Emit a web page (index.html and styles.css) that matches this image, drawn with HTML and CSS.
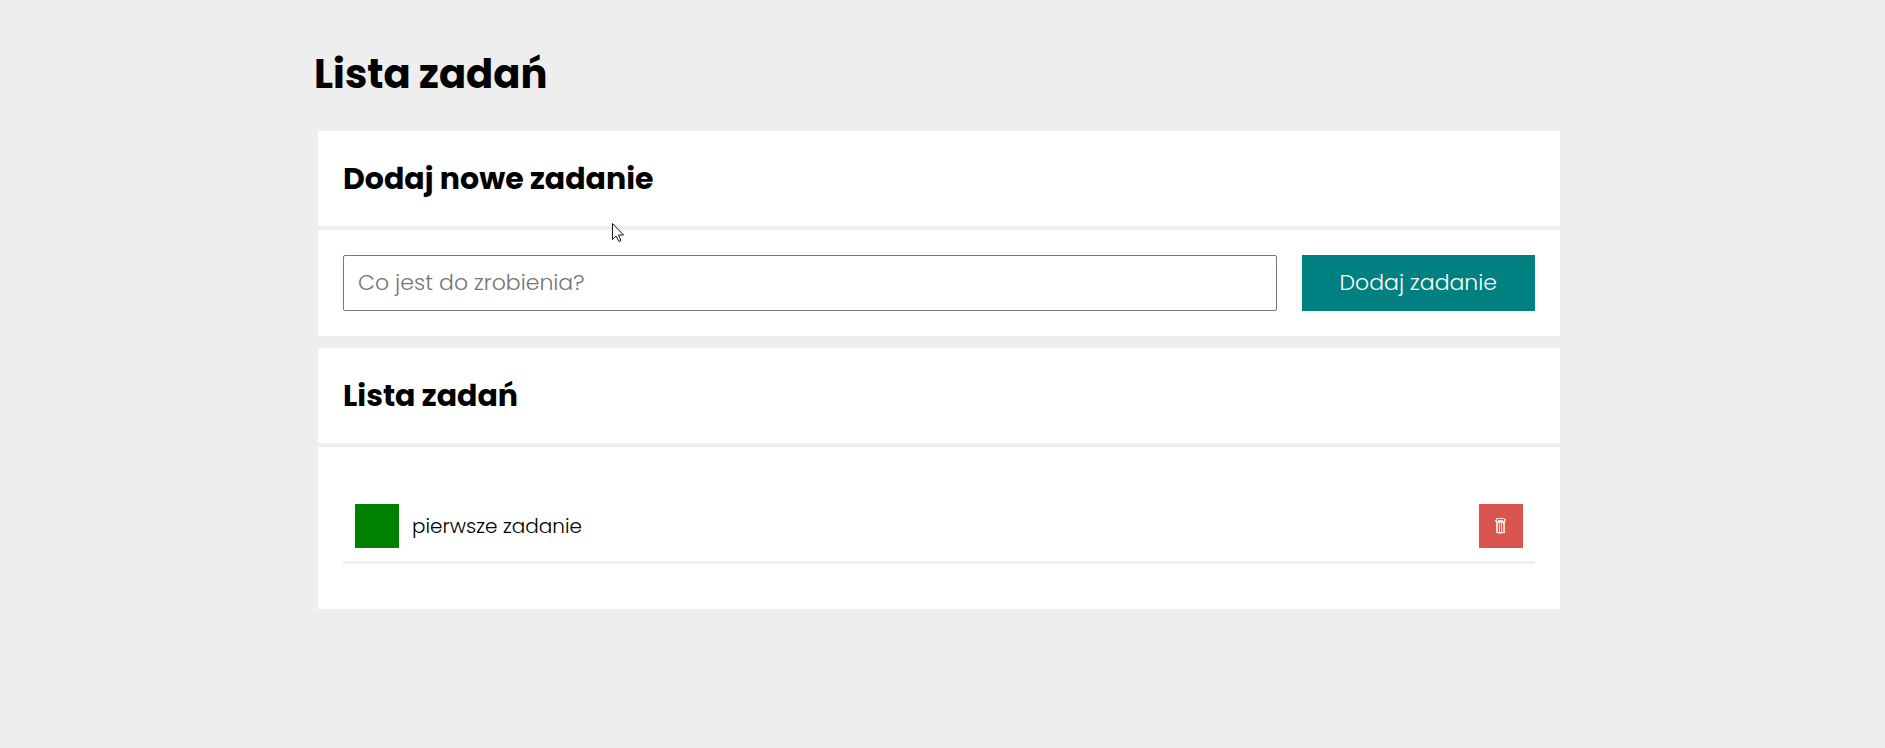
FILE: index.html
```html
<!DOCTYPE html>
<html lang="pl">
<head>
<meta charset="utf-8">
<meta name="viewport" content="width=device-width, initial-scale=1">
<title>Lista zadań</title>
<link rel="stylesheet" href="styles.css">
</head>
<body>
<main class="container">
  <h1 class="title">Lista zadań</h1>
  <section class="section">
    <h2 class="section-header">Dodaj nowe zadanie</h2>
    <form class="section-body form">
      <input class="form-input" type="text" placeholder="Co jest do zrobienia?" aria-label="Co jest do zrobienia?">
      <button class="form-button" type="button">Dodaj zadanie</button>
    </form>
  </section>
  <section class="section">
    <h2 class="section-header">Lista zadań</h2>
    <div class="section-body">
      <ul class="tasks">
        <li class="task">
          <button class="task-button task-done" type="button" aria-label="Oznacz jako zrobione"></button>
          <span class="task-text">pierwsze zadanie</span>
          <button class="task-button task-remove" type="button" aria-label="Usuń zadanie">
            <svg width="12" height="16" viewBox="0 0 12 16" fill="none" stroke="#f0dfd2" aria-hidden="true">
              <path d="M1 .5h9M1.500 1v3M0 2.500h2M0 3.500h11M3 2.500h5M9.500 1v3M1 4.500h9"/>
              <path d="M1.500 4v11M2.500 4v11M4.500 5v9M6.500 5v9M8.500 4v11M9.500 4v11M2 14.500h7"/>
              <path d="M3 15.500h5M9 .5h1M10.500 1v3" stroke="#e3b08a"/>
            </svg>
          </button>
        </li>
      </ul>
    </div>
  </section>
</main>
<svg class="cursor" width="13" height="20" viewBox="0 0 13 20" aria-hidden="true">
  <path d="M.5 .5v16l3.500-3.500 3 5.500 2-1-2.500-5.500h5z" fill="#fff" stroke="#101820"/>
</svg>
</body>
</html>
```
FILE: styles.css
```css
* {
  box-sizing: border-box;
}

body {
  margin: 0;
  padding: 0 15px 0 8px;
  background: #eee;
  color: #000;
  font-family: Poppins, Inter, "Open Sans", sans-serif;
  font-weight: 300;
}

.container {
  max-width: 1250px;
  margin: 0 auto;
  padding: 44px 4px;
}

.title {
  margin: 0 -4px 27px;
  font-size: 40px;
  line-height: 60px;
  font-weight: 700;
}

.section {
  margin-bottom: 12px;
}

.section-header {
  margin: 0 0 4px;
  padding: 25px;
  background: #fff;
  font-size: 30px;
  line-height: 45px;
  font-weight: 700;
}

.section-body {
  padding: 25px;
  background: #fff;
}

.form {
  display: flex;
  gap: 25px;
}

.form-input {
  flex: 1;
  min-width: 0;
  height: 56px;
  padding: 0 14px 2px;
  border: 1px solid #767676;
  border-radius: 2px;
  background: #fff;
  font: inherit;
  font-size: 22px;
}

.form-input::placeholder {
  color: #757575;
  opacity: 1;
}

.form-button {
  padding: 0 38px 2px;
  border: 0;
  background: #008080;
  color: #fff;
  font: inherit;
  font-size: 22px;
}

.tasks {
  margin: 20px 0;
  padding: 0;
  list-style: none;
}

.task {
  display: flex;
  align-items: center;
  gap: 13px;
  padding: 12px 12px 13px;
  border-bottom: 3px solid #eee;
}

.task-text {
  flex: 1;
  font-size: 20px;
}

.task-button {
  display: flex;
  align-items: center;
  justify-content: center;
  width: 44px;
  height: 44px;
  padding: 0;
  border: 0;
}

.task-done {
  background: #008000;
}

.task-remove {
  background: #db5550;
}

.cursor {
  position: absolute;
  top: 223px;
  left: 612px;
}
```
